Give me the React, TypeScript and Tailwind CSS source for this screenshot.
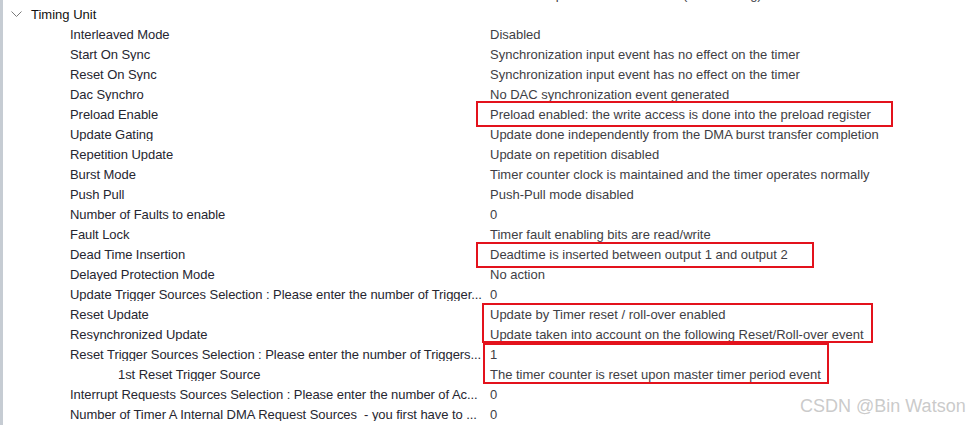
import type { ReactNode } from 'react'

// One property line of the tree: label column on the left, value column from x=490
type Row = { label: string; value: string; indent?: boolean }

const rows: Row[] = [
  { label: 'Interleaved Mode', value: 'Disabled' },
  { label: 'Start On Sync', value: 'Synchronization input event has no effect on the timer' },
  { label: 'Reset On Sync', value: 'Synchronization input event has no effect on the timer' },
  { label: 'Dac Synchro', value: 'No DAC synchronization event generated' },
  { label: 'Preload Enable', value: 'Preload enabled: the write access is done into the preload register' },
  { label: 'Update Gating', value: 'Update done independently from the DMA burst transfer completion' },
  { label: 'Repetition Update', value: 'Update on repetition disabled' },
  { label: 'Burst Mode', value: 'Timer counter clock is maintained and the timer operates normally' },
  { label: 'Push Pull', value: 'Push-Pull mode disabled' },
  { label: 'Number of Faults to enable', value: '0' },
  { label: 'Fault Lock', value: 'Timer fault enabling bits are read/write' },
  { label: 'Dead Time Insertion', value: 'Deadtime is inserted between output 1 and output 2' },
  { label: 'Delayed Protection Mode', value: 'No action' },
  { label: 'Update Trigger Sources Selection : Please enter the number of Trigger...', value: '0' },
  { label: 'Reset Update', value: 'Update by Timer reset / roll-over enabled' },
  { label: 'Resynchronized Update', value: 'Update taken into account on the following Reset/Roll-over event' },
  { label: 'Reset Trigger Sources Selection : Please enter the number of Triggers...', value: '1' },
  { label: '1st Reset Trigger Source', value: 'The timer counter is reset upon master timer period event', indent: true },
  { label: 'Interrupt Requests Sources Selection : Please enter the number of Ac...', value: '0' },
  { label: 'Number of Timer A Internal DMA Request Sources\u00a0 - you first have to ...', value: '0' },
]

function Line({ left, right, indent }: { left: ReactNode; right: string; indent?: boolean }) {
  return (
    <div className="flex h-5 items-center whitespace-nowrap">
      <div
        className={`w-[487px] shrink-0 overflow-hidden tracking-[-0.06px] text-[#262630] ${indent ? 'pl-[115px]' : 'pl-[67px]'}`}
      >
        {left}
      </div>
      <div className="text-[#3e3e44]">{right}</div>
    </div>
  )
}

// Red annotation frames drawn over the value column
function Mark({ className }: { className: string }) {
  return <div className={`absolute border-2 border-[#e3121c] ${className}`} />
}

export default function App() {
  return (
    <div
      className="relative flex h-[425px] w-[969px] overflow-hidden bg-white text-[13px] leading-none"
      style={{ fontFamily: '"Liberation Sans", Arial, sans-serif' }}
    >
      <div className="w-[3px] shrink-0 bg-[#c6ccd3]" />

      <div className="-mt-[16px] flex-1">
        {/* previous section, scrolled mostly out of view */}
        <Line left="" right="The timer operates in continuous (free-running) mode" />

        <div className="flex h-5 items-center whitespace-nowrap">
          <svg width="11" height="7" viewBox="0 0 11 7" className="ml-[8px] mr-[9px]">
            <path d="M0.5 0.5 L5.5 5.5 L10.5 0.5" fill="none" stroke="#7a7a7a" strokeWidth="1" />
          </svg>
          <span className="text-[#111]">Timing Unit</span>
        </div>

        {rows.map((r, i) => (
          <Line key={i} left={r.label} right={r.value} indent={r.indent} />
        ))}
      </div>

      <Mark className="left-[476px] top-[101px] h-[26px] w-[417px]" />
      <Mark className="left-[476px] top-[242px] h-[26px] w-[338px]" />
      <Mark className="left-[482px] top-[303px] h-[40px] w-[391px]" />
      <Mark className="left-[483px] top-[343px] h-[41px] w-[346px]" />

      <div className="absolute left-[800px] top-[397px] text-[18px] leading-none text-[#c4c4c4]/90">
        CSDN @Bin Watson
      </div>
    </div>
  )
}
